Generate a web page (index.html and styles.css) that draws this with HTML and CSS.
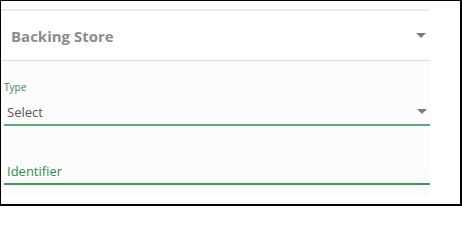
FILE: index.html
```html
<!DOCTYPE html>
<html>
<head>
<meta charset="utf-8">
<link rel="stylesheet" href="styles.css">
</head>
<body>
<div class="frame">
  <div class="panel">
    <div class="panel-header">
      <span class="panel-title">Backing Store</span>
      <span class="caret"></span>
    </div>
    <div class="panel-body">
      <div class="field">
        <label class="field-label">Type</label>
        <div class="field-row field-row-select">
          <span class="field-value">Select</span>
          <span class="caret"></span>
        </div>
      </div>
      <div class="field field-identifier">
        <div class="field-row field-row-input">
          <span class="field-placeholder">Identifier</span>
        </div>
      </div>
    </div>
  </div>
</div>
</body>
</html>
```

FILE: styles.css
```css
html, body {
  margin: 0;
  padding: 0;
  background: #ffffff;
  overflow: hidden;
}

body {
  font-family: "Open Sans", "DejaVu Sans", sans-serif;
}

.frame {
  box-sizing: border-box;
  width: 462px;
  height: 206px;
  border-style: solid;
  border-color: #000000;
  border-width: 1px 2px 2px 1px;
  padding-top: 8px;
  background: #ffffff;
}

.panel {
  width: 429px;
  border-top: 2px solid #ececec;
}

.panel-header {
  box-sizing: border-box;
  height: 50px;
  display: flex;
  align-items: center;
  justify-content: space-between;
  padding: 0 4px 0 10px;
  border-bottom: 1px solid #dedede;
  background: #ffffff;
}

.panel-title {
  font-size: 15px;
  font-weight: 700;
  color: #8c8c8c;
}

.caret {
  width: 0;
  height: 0;
  border-left: 5px solid transparent;
  border-right: 5px solid transparent;
  border-top: 5px solid #7a7a7a;
}

.panel-body {
  background: #fcfcfc;
  padding: 19px 0 12px 3px;
}

.field-label {
  display: block;
  font-size: 10px;
  line-height: 14px;
  color: #3a8758;
}

.field-row {
  display: flex;
  align-items: center;
  justify-content: space-between;
  height: 18px;
  padding: 0 3px 3px 3px;
  font-size: 13px;
  line-height: 18px;
}

.field-row-select {
  margin-top: 9px;
  border-bottom: 2px solid #5dab79;
}

.field-row-select .caret {
  margin-bottom: 2px;
}

.field-value {
  color: #555555;
}

.field-identifier {
  margin-top: 36px;
}

.field-row-input {
  border-bottom: 2px solid #3f9b5c;
}

.field-placeholder {
  color: #2f8d4c;
}
```
